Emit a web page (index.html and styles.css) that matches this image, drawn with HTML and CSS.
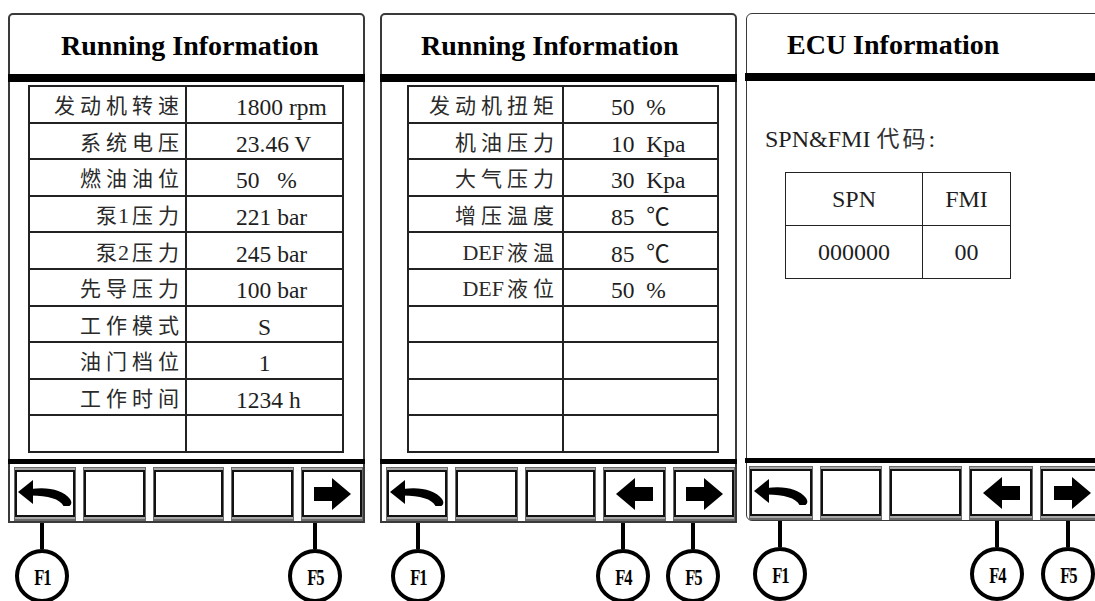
FILE: index.html
```html
<!DOCTYPE html>
<html lang="zh">
<head>
<meta charset="utf-8">
<title>Display screens</title>
<link rel="stylesheet" href="styles.css">
</head>
<body>
<div class="screens">

  <div class="unit">
    <div class="panel chamfer">
      <div class="title t1">Running Information</div>
      <div class="bar"></div>
      <div class="content">
        <div class="data d1">
          <div class="lab">发动机转速</div><div class="val">1800 rpm</div>
          <div class="lab">系统电压</div><div class="val">23.46 V</div>
          <div class="lab">燃油油位</div><div class="val">50&nbsp;&nbsp;&nbsp;%</div>
          <div class="lab"><span class="tight">泵</span><span class="lat">1</span>压力</div><div class="val">221 bar</div>
          <div class="lab"><span class="tight">泵</span><span class="lat">2</span>压力</div><div class="val">245 bar</div>
          <div class="lab">先导压力</div><div class="val">100 bar</div>
          <div class="lab">工作模式</div><div class="val mid">S</div>
          <div class="lab">油门档位</div><div class="val mid">1</div>
          <div class="lab">工作时间</div><div class="val">1234 h</div>
          <div class="lab"></div><div class="val"></div>
        </div>
      </div>
      <div class="bar2"></div>
      <div class="btnrow">
        <div class="btn"><div class="face">
          <svg class="ico-back" viewBox="0 0 54 28" width="54" height="28"><polygon points="0,12 15,0 15,24"/><path d="M13 9 C30 6.5 45 10 52 19 Q55 23.5 51.5 26 L45.5 26 C42 19 30 15.5 13 15.5 Z"/></svg>
        </div></div>
        <div class="btn"><div class="face"></div></div>
        <div class="btn"><div class="face"></div></div>
        <div class="btn"><div class="face"></div></div>
        <div class="btn"><div class="face">
          <svg class="ico-arrow" viewBox="0 0 37 32" width="37" height="32"><path d="M0 9 H18 V0 L37 16 L18 32 V23 H0 Z"/></svg>
        </div></div>
      </div>
    </div>
    <div class="keyrow">
      <div class="key k1a"><div class="stem"></div><div class="knob"><span>F1</span></div></div>
      <div class="key k1b"><div class="stem"></div><div class="knob"><span>F5</span></div></div>
    </div>
  </div>

  <div class="unit u2">
    <div class="panel chamfer">
      <div class="title t2">Running Information</div>
      <div class="bar"></div>
      <div class="content c2">
        <div class="data d2">
          <div class="lab">发动机扭矩</div><div class="val">50&nbsp;&nbsp;%</div>
          <div class="lab">机油压力</div><div class="val">10&nbsp;&nbsp;Kpa</div>
          <div class="lab">大气压力</div><div class="val">30&nbsp;&nbsp;Kpa</div>
          <div class="lab">增压温度</div><div class="val">85&nbsp;&nbsp;℃</div>
          <div class="lab"><span class="lat">DEF</span>液温</div><div class="val">85&nbsp;&nbsp;℃</div>
          <div class="lab"><span class="lat">DEF</span>液位</div><div class="val">50&nbsp;&nbsp;%</div>
          <div class="lab"></div><div class="val"></div>
          <div class="lab"></div><div class="val"></div>
          <div class="lab"></div><div class="val"></div>
          <div class="lab"></div><div class="val"></div>
        </div>
      </div>
      <div class="bar2"></div>
      <div class="btnrow">
        <div class="btn"><div class="face">
          <svg class="ico-back" viewBox="0 0 54 28" width="54" height="28"><polygon points="0,12 15,0 15,24"/><path d="M13 9 C30 6.5 45 10 52 19 Q55 23.5 51.5 26 L45.5 26 C42 19 30 15.5 13 15.5 Z"/></svg>
        </div></div>
        <div class="btn"><div class="face"></div></div>
        <div class="btn"><div class="face"></div></div>
        <div class="btn"><div class="face">
          <svg class="ico-arrow" viewBox="0 0 37 32" width="37" height="32"><path d="M37 9 H19 V0 L0 16 L19 32 V23 H37 Z"/></svg>
        </div></div>
        <div class="btn"><div class="face">
          <svg class="ico-arrow" viewBox="0 0 37 32" width="37" height="32"><path d="M0 9 H18 V0 L37 16 L18 32 V23 H0 Z"/></svg>
        </div></div>
      </div>
    </div>
    <div class="keyrow">
      <div class="key k2a"><div class="stem"></div><div class="knob"><span>F1</span></div></div>
      <div class="key k2b"><div class="stem"></div><div class="knob"><span>F4</span></div></div>
      <div class="key k2c"><div class="stem"></div><div class="knob"><span>F5</span></div></div>
    </div>
  </div>

  <div class="unit u3">
    <div class="panel rounded">
      <div class="title t3">ECU Information</div>
      <div class="bar"></div>
      <div class="content c3">
        <p class="codes">SPN&amp;FMI <span class="cjk">代码</span>:</p>
        <table class="fault">
          <tr><td class="spn">SPN</td><td class="fmi">FMI</td></tr>
          <tr><td class="spn">000000</td><td class="fmi">00</td></tr>
        </table>
      </div>
      <div class="bar2"></div>
      <div class="btnrow b3">
        <div class="btn"><div class="face">
          <svg class="ico-back" viewBox="0 0 54 28" width="54" height="28"><polygon points="0,12 15,0 15,24"/><path d="M13 9 C30 6.5 45 10 52 19 Q55 23.5 51.5 26 L45.5 26 C42 19 30 15.5 13 15.5 Z"/></svg>
        </div></div>
        <div class="btn"><div class="face"></div></div>
        <div class="btn"><div class="face"></div></div>
        <div class="btn"><div class="face">
          <svg class="ico-arrow" viewBox="0 0 37 32" width="37" height="32"><path d="M37 9 H19 V0 L0 16 L19 32 V23 H37 Z"/></svg>
        </div></div>
        <div class="btn"><div class="face">
          <svg class="ico-arrow" viewBox="0 0 37 32" width="37" height="32"><path d="M0 9 H18 V0 L37 16 L18 32 V23 H0 Z"/></svg>
        </div></div>
      </div>
    </div>
    <div class="keyrow">
      <div class="key k3a"><div class="stem"></div><div class="knob"><span>F1</span></div></div>
      <div class="key k3b"><div class="stem"></div><div class="knob"><span>F4</span></div></div>
      <div class="key k3c"><div class="stem"></div><div class="knob"><span>F5</span></div></div>
    </div>
  </div>

</div>
</body>
</html>
```
FILE: styles.css
```css
html, body {
  margin: 0;
  padding: 0;
  background: #fff;
  overflow: hidden;
  width: 1095px;
  height: 601px;
}

body {
  font-family: "Liberation Serif", "Noto Sans CJK SC", serif;
  color: #1a1a1a;
}

.screens {
  display: flex;
  align-items: flex-start;
  padding: 13px 0 0 8px;
  width: 1095px;
  height: 601px;
  box-sizing: border-box;
  overflow: hidden;
}

.unit {
  display: flex;
  flex-direction: column;
  flex: none;
}

.u2 { margin-left: 15px; }
.u3 { margin-left: 9px; }

.panel {
  width: 357px;
  box-sizing: border-box;
  border: 2px solid #3a3a3a;
  display: flex;
  flex-direction: column;
  background: #fff;
}

.chamfer { border-radius: 5px 5px 0 0; }
.rounded { border-radius: 6px 6px 0 6px; border-width: 1.5px; width: 358px; }

.title {
  height: 59px;
  line-height: 61px;
  font-family: "Liberation Serif", serif;
  font-weight: bold;
  font-size: 28px;
  color: #000;
  white-space: nowrap;
}

.t1 { padding-left: 51px; }
.t2 { padding-left: 39px; }
.t3 { padding-left: 40px; }

.bar {
  height: 8px;
  background: #000;
  margin: 0 -2px;
}

.bar2 {
  height: 5px;
  background: #000;
  margin: 0 -2px;
}

.content {
  height: 377px;
  box-sizing: border-box;
  padding: 3px 19px 0 18px;
}

.c2 { padding: 3px 16px 0 25px; }

.data {
  display: grid;
  grid-template-columns: 1fr 1fr;
  grid-template-rows: repeat(10, 1fr);
  height: 368px;
  box-sizing: border-box;
  border-top: 2px solid #222;
  border-left: 2px solid #222;
}

.lab, .val {
  border-right: 2px solid #222;
  border-bottom: 2px solid #222;
  display: flex;
  align-items: center;
  white-space: nowrap;
  overflow: hidden;
  line-height: 26px;
  padding-top: 4px;
}

.lab {
  justify-content: flex-end;
  font-size: 21px;
  letter-spacing: 5px;
  padding-right: 1px;
  color: #2a2a2a;
}

.lab .tight { letter-spacing: 1px; }

.lab .lat {
  letter-spacing: 0;
  font-size: 22px;
  margin-right: 3px;
}

.val {
  font-size: 23.5px;
  padding-left: 49px;
  padding-top: 6px;
  color: #1e1e1e;
}

.d2 .lab { padding-right: 3px; }
.d2 .val { padding-left: 47px; }

.val.mid {
  justify-content: center;
  padding-left: 0;
}

.c3 {
  padding: 0 0 0 18px;
}

.codes {
  margin: 44px 0 0 0;
  font-size: 24px;
  line-height: 28px;
  color: #1e1e1e;
}

.codes .cjk {
  font-size: 23px;
  letter-spacing: 3px;
  color: #333;
}

.fault {
  margin: 18px 0 0 20px;
  border-collapse: collapse;
  width: 226px;
  table-layout: fixed;
}

.fault td {
  border: 1.5px solid #222;
  height: 52px;
  padding: 0;
  text-align: center;
  vertical-align: middle;
  font-size: 24px;
  color: #1e1e1e;
}

.fault .spn { width: 136px; }

.btnrow {
  display: grid;
  grid-template-columns: 62px 63px 71px 63px 62px;
  column-gap: 7px;
  padding: 3px 0 0 4px;
  height: 57px;
  box-sizing: border-box;
}

.b3 { padding-left: 2px; grid-template-columns: 64px 62px 73px 64px 64px; column-gap: 7px; }

.btn {
  box-sizing: border-box;
  height: 54px;
  border: 1px solid #6a6a6a;
  border-bottom-width: 2px;
  padding: 2px 0;
  background: #a8a8a8;
}

.face {
  box-sizing: border-box;
  height: 100%;
  border: 2px solid #111;
  background: #fff;
  display: flex;
  align-items: center;
  justify-content: center;
}

.face svg { display: block; fill: #000; }

.keyrow {
  display: flex;
  align-items: flex-start;
}

.key {
  width: 54px;
  display: flex;
  flex-direction: column;
  align-items: center;
  flex: none;
}

.stem {
  width: 4px;
  height: 26px;
  background: #000;
}

.knob {
  box-sizing: border-box;
  width: 54px;
  height: 54px;
  border: 4px solid #000;
  border-radius: 50%;
  background: #fff;
  display: flex;
  align-items: center;
  justify-content: center;
}

.knob span {
  display: block;
  font-family: "Liberation Serif", serif;
  font-weight: bold;
  font-size: 23px;
  letter-spacing: -1.5px;
  transform: scaleX(0.72);
  color: #000;
  margin-top: 4px;
}

.k1a { margin-left: 7px; }
.k1b { margin-left: 219px; }

.k2a { margin-left: 11px; }
.k2b { margin-left: 151px; }
.k2c { margin-left: 16px; }

.k3a { margin-left: 7px; }
.k3b { margin-left: 163px; }
.k3c { margin-left: 17px; }
```
